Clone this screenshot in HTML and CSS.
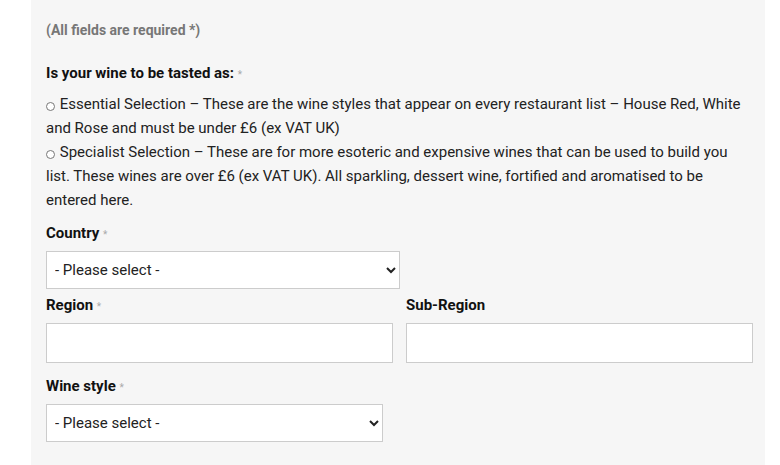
FILE: index.html
```html
<!DOCTYPE html>
<html lang="en">
<head>
    <meta charset="UTF-8">
    <meta name="viewport" content="width=device-width, initial-scale=1.0">
    <title>Wine Entry</title>
    <link rel="stylesheet" href="styles.css">
</head>
<body>
    <div class="page">
        <form class="entry-form">
            <p class="note">(All fields are required *)</p>

            <div class="field tasting">
                <p class="label">Is your wine to be tasted as: <span class="req">*</span></p>
                <label class="choice"><input type="radio" name="tasting"> Essential Selection – These are the wine styles that appear on every restaurant list – House Red, White and Rose and must be under £6 (ex VAT UK)</label>
                <label class="choice"><input type="radio" name="tasting"> Specialist Selection – These are for more esoteric and expensive wines that can be used to build you list. These wines are over £6 (ex VAT UK). All sparkling, dessert wine, fortified and aromatised to be entered here.</label>
            </div>

            <div class="field">
                <label class="label" for="country">Country <span class="req">*</span></label>
                <select id="country" class="country-select">
                    <option>- Please select -</option>
                </select>
            </div>

            <div class="field row">
                <div class="col">
                    <label class="label" for="region">Region <span class="req">*</span></label>
                    <input type="text" id="region" class="text-input region-input">
                </div>
                <div class="col">
                    <label class="label" for="subregion">Sub-Region</label>
                    <input type="text" id="subregion" class="text-input">
                </div>
            </div>

            <div class="field">
                <label class="label" for="style">Wine style <span class="req">*</span></label>
                <select id="style" class="style-select">
                    <option>- Please select -</option>
                </select>
            </div>
        </form>
    </div>
</body>
</html>
```

FILE: styles.css
```css
body {
    margin: 0;
    font-family: Roboto, "Liberation Sans", Arial, sans-serif;
    color: #222;
    background: #fff;
}
.page {
    padding-left: 31px;
}
.entry-form {
    width: 734px;
    min-height: 465px;
    box-sizing: border-box;
    padding: 22px 12px 0 15px;
    background-color: #f6f6f6;
}
.note {
    margin: 0 0 26px;
    font-size: 14px;
    font-weight: bold;
    color: #777;
}
.field {
    margin-bottom: 7px;
}
.label {
    display: block;
    margin: 0 0 9px;
    font-size: 15px;
    font-weight: bold;
    color: #111;
}
.req {
    font-size: 10px;
    font-weight: normal;
    color: #aaa;
}
.tasting {
    margin-bottom: 12px;
}
.tasting .label {
    margin-bottom: 10px;
}
.choice {
    display: block;
    font-size: 15px;
    line-height: 24px;
    color: #222;
}
.choice input {
    appearance: none;
    width: 9px;
    height: 9px;
    margin: 0 1px 0 0;
    border: 1px solid #777;
    border-radius: 50%;
    background: #fff;
    vertical-align: -2px;
}
select, .text-input {
    box-sizing: border-box;
    font-family: inherit;
    font-size: 15px;
    color: #222;
    background-color: #fff;
    border: 1px solid #ccc;
    border-radius: 0;
}
select {
    height: 38px;
    padding: 0 4px;
}
.country-select {
    width: 354px;
}
.style-select {
    width: 337px;
}
.row {
    display: flex;
    gap: 13px;
    margin-bottom: 14px;
}
.col {
    flex: 1;
}
.text-input {
    display: block;
    width: 100%;
    height: 40px;
}
.region-input {
    margin-top: 2px;
}
```
